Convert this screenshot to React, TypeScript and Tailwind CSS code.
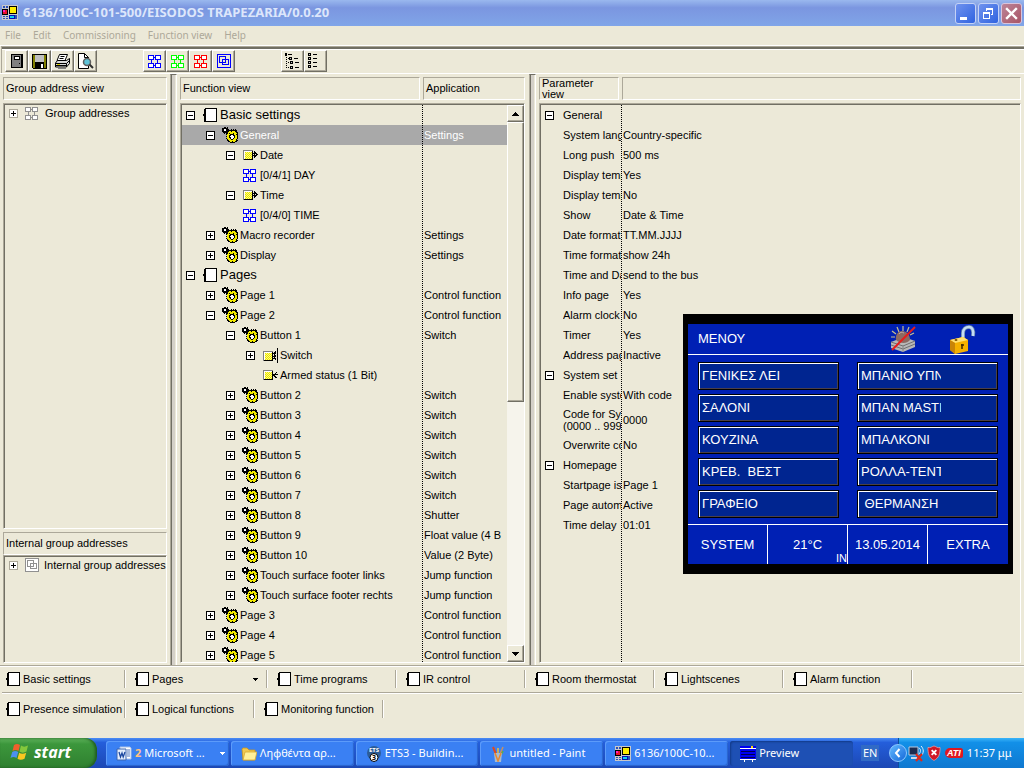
import React from 'react';
import clsx from 'clsx';

const SANS = "font-['Liberation_Sans',sans-serif]";
const UI = "font-['Noto_Sans',sans-serif]";

interface PixelIconProps {
  rows: string[];
  colors: Record<string, string>;
  className?: string;
}

// Draws a small bitmap, one character per pixel
const PixelIcon: React.FC<PixelIconProps> = ({ rows, colors, className }) => (
  <svg
    width={rows[0].length}
    height={rows.length}
    viewBox={`0 0 ${rows[0].length} ${rows.length}`}
    shapeRendering="crispEdges"
    className={clsx('shrink-0', className)}
    aria-hidden="true"
  >
    {rows.flatMap((row, y) =>
      row.split('').map((c, x) =>
        colors[c] ? <rect key={`${x}-${y}`} x={x} y={y} width="1" height="1" fill={colors[c]} /> : null
      )
    )}
  </svg>
);

const GEARS = [
  '..KK.K..........',
  'KKKKKK..........',
  'KKWWKKK..K.K.K..',
  'KKWWKKKKKKKKKKK.',
  'KKKKKKKYYKYYYKK.',
  '.KKKKKYYYYYYYYKK',
  '..K.KKYKYYYKYYYK',
  '....KYYYKKKKYYKK',
  '.....YYKKWWKKYYK',
  '....KYYKWWWWKYYK',
  '.....YYKKWWWKYYK',
  '....KYYYKWWKYYYK',
  '.....KYYYKKYYYK.',
  '.....KKYYYYYYYKK',
  '......KKYYKYYKK.',
  '........KKKKK...',
];

const NET = [
  'BBBBBB.BBBBBB',
  'BWWWWB.BWWWWB',
  'BWWWWBBBWWWWB',
  'BWWWWB.BWWWWB',
  'BBBBBB.BBBBBB',
  '...B.....B...',
  '...B.....B...',
  '...B.....B...',
  'BBBBBB.BBBBBB',
  'BWWWWB.BWWWWB',
  'BWWWWBBBWWWWB',
  'BWWWWB.BWWWWB',
  'BBBBBB.BBBBBB',
];

const OBJ_OUT = [
  'GGGGGGGGGG......',
  'GWWWWWWWWK.K....',
  'GWYVYVYVYK.KK...',
  'GWVYVYVYVKKKKK..',
  'GWYVYVYVYK.K.KK.',
  'GWVYVYVYVKKKKK..',
  'GWYVYVYVYK.KK...',
  'GWVYVYVYVK.K....',
  'GWYVYVYVYK......',
  'GKKKKKKKKK......',
];

const OBJ_IN = [
  'GGGGGGGGGG......',
  'GWWWWWWWWK......',
  'GWYVYVYVYK...K..',
  'GWVYVYVYVK..K...',
  'GWYVYVYVYKKKKKK.',
  'GWVYVYVYVKKK....',
  'GWYVYVYVYK.KK...',
  'GWVYVYVYVK..KK..',
  'GWYVYVYVYK......',
  'GKKKKKKKKK......',
];

const OBJ_BOTH = [
  '..............K.',
  '..............K.',
  '..............K.',
  'GGGGGGGGGG..K.K.',
  'GWWWWWWWWK.KK.K.',
  'GWYVYVYVYKKKK.K.',
  'GWVYVYVYVK.K..K.',
  'GWYVYVYVYK.KK.K.',
  'GWVYVYVYVKKKK.K.',
  'GWYVYVYVYK.K..K.',
  'GWVYVYVYVKKKK.K.',
  'GWYVYVYVYK..K.K.',
  'GKKKKKKKKK....K.',
  '..............K.',
  '..............K.',
];

const BOOK = [
  '..KKKKKKKKKKKK',
  '.KKWWWWWWWWWWK',
  '.KKWWWWWWWWWWK',
  '.KKWWWWWWWWWWK',
  '.KKWWWWWWWWWWK',
  '.KKWWWWWWWWWWK',
  'KKKWWWWWWWWWWK',
  'KKKWWWWWWWWWWK',
  '.KKWWWWWWWWWWK',
  '.KKWWWWWWWWWWK',
  '.KKWWWWWWWWWWK',
  '.KKWWWWWWWWWWK',
  '.KKWWWWWWWWWWK',
  '.KKKKKKKKKKKKK',
];

const INK = { K: '#000', W: '#fff', Y: '#e8e000', G: '#808080', V: '#ffff80' };

const Gears = () => <PixelIcon rows={GEARS} colors={{ K: '#000', W: '#fff', Y: '#f2ea00' }} />;
const Book = () => <PixelIcon rows={BOOK} colors={INK} />;
const Net: React.FC<{ color: string }> = ({ color }) => (
  <PixelIcon rows={NET} colors={{ B: color, W: '#fff' }} />
);

const InternalNet: React.FC<{ color: string; fill: string }> = ({ color, fill }) => (
  <svg width="14" height="14" viewBox="0 0 14 14" shapeRendering="crispEdges" className="shrink-0" aria-hidden="true">
    <rect x="0.5" y="0.5" width="13" height="13" fill={fill} stroke={color} />
    <path d="M2.5 2.5h6v6h-6zM5.5 5.5h6v5h-6z" fill="none" stroke={color} />
  </svg>
);

const AppIcon: React.FC<{ className?: string }> = ({ className }) => (
  <svg width="16" height="16" viewBox="0 0 16 16" shapeRendering="crispEdges" className={clsx('shrink-0', className)} aria-hidden="true">
    <path d="M0 0h16v15H0z" fill="#c8c8c8" />
    <path d="M1 1h5v2H1zM1 11h5v3H1zM13 10h2v4h-2z" fill="#2a4fb8" />
    <path d="M3 0h1v3H3zM3 11h1v3H3zM0 12h6v1H0z" fill="#c8c8c8" />
    <path d="M0 4h6v6H0z" fill="#000" />
    <path d="M1 5h4v4H1z" fill="#e8102c" />
    <path d="M1 5h2v2H1z" fill="#ff20c0" />
    <path d="M7 1h8v8H7z" fill="#000" />
    <path d="M8 2h6v6H8z" fill="#ffee00" />
    <path d="M7 10h6v4H7z" fill="#0010b0" />
    <path d="M8 11h4v2H8z" fill="#10d0f0" />
  </svg>
);

const Expander: React.FC<{ open?: boolean; label: string; faded?: boolean }> = ({ open, label, faded }) => (
  <button
    type="button"
    aria-label={label}
    aria-expanded={!!open}
    className={clsx('block size-[9px] shrink-0 border bg-white', faded ? 'border-[#aca899]' : 'border-black')}
  >
    <svg width="7" height="7" viewBox="0 0 7 7" shapeRendering="crispEdges" className="block" aria-hidden="true">
      <path d="M1 3h5v1H1z" />
      {!open && <path d="M3 1h1v5H3z" />}
    </svg>
  </button>
);

type IconKind = 'book' | 'gears' | 'out' | 'in' | 'both' | 'net';

interface TreeRow {
  level: number;
  icon: IconKind;
  label: string;
  state?: 'open' | 'closed';
  app?: string;
}

const treeRows: TreeRow[] = [
  { level: 0, icon: 'book', label: 'Basic settings', state: 'open' },
  { level: 1, icon: 'gears', label: 'General', state: 'open', app: 'Settings' },
  { level: 2, icon: 'out', label: 'Date', state: 'open' },
  { level: 2, icon: 'net', label: '[0/4/1] DAY' },
  { level: 2, icon: 'out', label: 'Time', state: 'open' },
  { level: 2, icon: 'net', label: '[0/4/0] TIME' },
  { level: 1, icon: 'gears', label: 'Macro recorder', state: 'closed', app: 'Settings' },
  { level: 1, icon: 'gears', label: 'Display', state: 'closed', app: 'Settings' },
  { level: 0, icon: 'book', label: 'Pages', state: 'open' },
  { level: 1, icon: 'gears', label: 'Page 1', state: 'closed', app: 'Control function' },
  { level: 1, icon: 'gears', label: 'Page 2', state: 'open', app: 'Control function' },
  { level: 2, icon: 'gears', label: 'Button 1', state: 'open', app: 'Switch' },
  { level: 3, icon: 'both', label: 'Switch', state: 'closed' },
  { level: 3, icon: 'in', label: 'Armed status (1 Bit)' },
  { level: 2, icon: 'gears', label: 'Button 2', state: 'closed', app: 'Switch' },
  { level: 2, icon: 'gears', label: 'Button 3', state: 'closed', app: 'Switch' },
  { level: 2, icon: 'gears', label: 'Button 4', state: 'closed', app: 'Switch' },
  { level: 2, icon: 'gears', label: 'Button 5', state: 'closed', app: 'Switch' },
  { level: 2, icon: 'gears', label: 'Button 6', state: 'closed', app: 'Switch' },
  { level: 2, icon: 'gears', label: 'Button 7', state: 'closed', app: 'Switch' },
  { level: 2, icon: 'gears', label: 'Button 8', state: 'closed', app: 'Shutter' },
  { level: 2, icon: 'gears', label: 'Button 9', state: 'closed', app: 'Float value (4 B' },
  { level: 2, icon: 'gears', label: 'Button 10', state: 'closed', app: 'Value (2 Byte)' },
  { level: 2, icon: 'gears', label: 'Touch surface footer links', state: 'closed', app: 'Jump function' },
  { level: 2, icon: 'gears', label: 'Touch surface footer rechts', state: 'closed', app: 'Jump function' },
  { level: 1, icon: 'gears', label: 'Page 3', state: 'closed', app: 'Control function' },
  { level: 1, icon: 'gears', label: 'Page 4', state: 'closed', app: 'Control function' },
  { level: 1, icon: 'gears', label: 'Page 5', state: 'closed', app: 'Control function' },
];

const indents = ['pl-1', 'pl-6', 'pl-11', 'pl-16'];

const params: { label: string; value?: string }[] = [
  { label: 'General' },
  { label: 'System lang', value: 'Country-specific' },
  { label: 'Long push', value: '500 ms' },
  { label: 'Display temp', value: 'Yes' },
  { label: 'Display temp', value: 'No' },
  { label: 'Show', value: 'Date & Time' },
  { label: 'Date format', value: 'TT.MM.JJJJ' },
  { label: 'Time format', value: 'show 24h' },
  { label: 'Time and Da', value: 'send to the bus' },
  { label: 'Info page', value: 'Yes' },
  { label: 'Alarm clock', value: 'No' },
  { label: 'Timer', value: 'Yes' },
  { label: 'Address pag', value: 'Inactive' },
  { label: 'System set' },
  { label: 'Enable syste', value: 'With code' },
  { label: 'Code for Sys\n(0000 .. 999', value: '0000' },
  { label: 'Overwrite co', value: 'No' },
  { label: 'Homepage' },
  { label: 'Startpage is', value: 'Page 1' },
  { label: 'Page autom', value: 'Active' },
  { label: 'Time delay', value: '01:01' },
];

const TreeIcon: React.FC<{ kind: IconKind }> = ({ kind }) => {
  switch (kind) {
    case 'book':
      return <Book />;
    case 'gears':
      return <Gears />;
    case 'out':
      return <PixelIcon rows={OBJ_OUT} colors={INK} />;
    case 'in':
      return <PixelIcon rows={OBJ_IN} colors={INK} />;
    case 'both':
      return <PixelIcon rows={OBJ_BOTH} colors={INK} />;
    default:
      return <Net color="#0000ff" />;
  }
};

const HeaderCell: React.FC<{ className?: string; children?: React.ReactNode }> = ({ className, children }) => (
  <div
    className={clsx(
      'flex h-[23px] items-center border border-t-[#aca899] border-r-white border-b-white border-l-[#aca899] pl-0.5',
      className
    )}
  >
    {children}
  </div>
);

const Sunken: React.FC<{ className?: string; children?: React.ReactNode }> = ({ className, children }) => (
  <div className={clsx('border border-t-[#aca899] border-r-white border-b-white border-l-[#aca899]', className)}>
    <div className="relative flex h-full overflow-hidden border-t border-l border-[#716f64]">{children}</div>
  </div>
);

const Splitter = () => (
  <div className="w-[7px] shrink-0 border-t border-r border-l border-t-[#716f64] border-r-white border-l-[#aca899]">
    <div className="h-full border-r border-l border-r-[#ece9d8] border-l-[#716f64] bg-[#d4d0c8]" />
  </div>
);

const RAISED = 'border border-t-white border-r-[#716f64] border-b-[#716f64] border-l-white bg-[#ece9d8] shadow-[inset_-1px_-1px_0_#aca899]';

const TitleBar = () => (
  <header className="flex h-[26px] shrink-0 items-center bg-linear-to-b from-[#9ab8ee] via-[#7b96e0] via-30% to-[#80a5e8] pr-0.5 pl-0.5">
    <AppIcon />
    <h1 className="ml-[5px] flex-1 text-[13px] font-bold whitespace-nowrap text-[#dce6fb] font-['Noto_Sans',sans-serif]">
      6136/100C-101-500/EISODOS TRAPEZARIA/0.0.20
    </h1>
    <div className="flex gap-[2px]">
      <button type="button" aria-label="Minimize" className="size-[21px] rounded-[3px] border border-[#c4d2f6] bg-linear-to-br from-[#6f92ee] to-[#2f62e0]">
        <svg width="19" height="19" viewBox="0 0 19 19" className="block"><path d="M4 13h7v3H4z" fill="#fff" /></svg>
      </button>
      <button type="button" aria-label="Restore" className="size-[21px] rounded-[3px] border border-[#c4d2f6] bg-linear-to-br from-[#6f92ee] to-[#2f62e0]">
        <svg width="19" height="19" viewBox="0 0 19 19" className="block" fill="#fff" shapeRendering="crispEdges">
          <path d="M7 4h7v7h-2v-1h1V6H8v1H7z" />
          <path fillRule="evenodd" d="M4 8h7v7H4zM5 10v4h5v-4z" />
        </svg>
      </button>
      <button type="button" aria-label="Close" className="size-[21px] rounded-[3px] border border-[#d8c4dc] bg-linear-to-br from-[#bb8499] to-[#a85566]">
        <svg width="19" height="19" viewBox="0 0 19 19" className="block"><path d="M5 5l9 9M14 5l-9 9" stroke="#fff" strokeWidth="2.400" strokeLinecap="square" /></svg>
      </button>
    </div>
  </header>
);

const ToolButton: React.FC<{ label: string; children: React.ReactNode }> = ({ label, children }) => (
  <button type="button" aria-label={label} className={clsx('flex h-[22px] w-[23px] items-center justify-center', RAISED)}>
    {children}
  </button>
);

const ListGlyph: React.FC<{ tree?: boolean }> = ({ tree }) => (
  <svg width="17" height="16" viewBox="0 0 17 16" shapeRendering="crispEdges" aria-hidden="true">
    {tree ? (
      <>
        <path d="M1 0h2v3H1zM4 1h4v1H4zM2 4h1v1H2zM2 6h1v1H2zM2 8h1v1H2zM2 10h1v1H2zM2 12h1v1H2zM2 14h1v1H2zM4 5h1v1H4zM4 9h1v1H4zM4 14h1v1H4z" />
        <path d="M5 4h3v3H5zM10 5h4v1h-4zM6 8h3v3H6zM11 9h4v1h-4zM6 13h3v3H6zM11 14h4v1h-4z" />
        <path d="M6 5h1v1H6zM7 9h1v1H7zM7 14h1v1H7z" fill="#c8c8c8" />
      </>
    ) : (
      <>
        <path d="M1 0h3v3H1zM1 4h3v3H1zM1 8h3v3H1zM1 12h3v3H1zM6 1h4v1H6zM6 5h4v1H6zM6 9h4v1H6zM6 13h4v1H6z" />
        <path d="M2 1h1v1H2zM2 5h1v1H2zM2 9h1v1H2zM2 13h1v1H2z" fill="#ccc" />
      </>
    )}
  </svg>
);

const Toolbar = () => (
  <div className="border-t border-b border-white">
    <div className="ml-px flex gap-[46px] border-t border-l border-[#aca899] pb-px pl-[3px] shadow-[inset_0_2px_0_#716f64,inset_0_3px_0_white]">
      <div className="flex pt-[3px]">
        <ToolButton label="Catalogue">
          <svg width="12" height="16" viewBox="0 0 12 16" shapeRendering="crispEdges" aria-hidden="true">
            <path d="M0 1h12v14H0z" />
            <path d="M1 2h9v12H1z" fill="#808080" />
            <path d="M3 3h6v4H3z" />
            <path d="M4 4h4v2H4z" fill="#fff" />
            <path d="M8 10h1v1H8z" />
          </svg>
        </ToolButton>
        <ToolButton label="Save">
          <svg width="15" height="15" viewBox="0 0 15 15" shapeRendering="crispEdges" aria-hidden="true">
            <path d="M0 0h15v15H1l-1-1z" />
            <path d="M1 1h2v8h9V1h2v13H1z" fill="#808000" />
            <path d="M3 1h9v7H3z" fill="#c0c0c0" />
            <path d="M3 9h9v6H3z" />
            <path d="M9 10h2v4H9z" fill="#fff" />
          </svg>
        </ToolButton>
        <ToolButton label="Print">
          <svg width="17" height="16" viewBox="0 0 17 16" aria-hidden="true">
            <path d="M5.500 1.500h8l-2.500 6H3z" fill="#fff" stroke="#000" />
            <path d="M6.500 3.500h4M5.500 5.500h4" stroke="#000" />
            <path d="M3.500 7.500h9l3-2v5l-3 3.500h-11v-4z" fill="#d8d8d8" stroke="#000" />
            <path d="M1.500 10.500h11l3-3M1.500 12.500h11M12.500 10.500v3.500" stroke="#000" fill="none" />
            <path d="M3 11.500h3" stroke="#d8d000" />
            <path d="M4 15.500h8" stroke="#808080" />
          </svg>
        </ToolButton>
        <ToolButton label="Print preview">
          <svg width="17" height="16" viewBox="0 0 17 16" aria-hidden="true">
            <path d="M1.500 0.500h6l4 4v11h-10z" fill="#fff" stroke="#000" />
            <path d="M7.500 0.500v4h4" fill="none" stroke="#000" />
            <circle cx="10" cy="9" r="3.500" fill="#5fc4d8" stroke="#606060" strokeWidth="1.500" />
            <path d="M12.500 11.500l3.500 3.500" stroke="#303030" strokeWidth="2" />
          </svg>
        </ToolButton>
      </div>
      <div className="flex pt-[3px]">
        <ToolButton label="Group addresses"><Net color="#0000ff" /></ToolButton>
        <ToolButton label="Green addresses"><Net color="#00ff00" /></ToolButton>
        <ToolButton label="Red addresses"><Net color="#ff0000" /></ToolButton>
        <ToolButton label="Internal addresses"><InternalNet color="#0000ff" fill="#ece9d8" /></ToolButton>
      </div>
      <div className="flex pt-[3px]">
        <ToolButton label="Expand tree"><ListGlyph tree /></ToolButton>
        <ToolButton label="Collapse tree"><ListGlyph /></ToolButton>
      </div>
    </div>
  </div>
);

const AddressPanel = () => (
  <div className="flex w-[164px] shrink-0 flex-col pt-[3px] pb-0.5">
    <HeaderCell>Group address view</HeaderCell>
    <Sunken className="mt-[3px] flex-1">
      <div className="flex h-4 items-center pl-1">
        <Expander label="Group addresses" faded />
        <span className="ml-[7px] flex w-5"><Net color="#909090" /></span>
        <span className="whitespace-nowrap">Group addresses</span>
      </div>
    </Sunken>
    <HeaderCell className="mt-[3px]">Internal group addresses</HeaderCell>
    <Sunken className="h-[108px]">
      <div className="flex h-4 items-center pl-1">
        <Expander label="Internal group addresses" faded />
        <span className="ml-[7px] flex w-[19px]"><InternalNet color="#909090" fill="#fff" /></span>
        <span className="whitespace-nowrap">Internal group addresses</span>
      </div>
    </Sunken>
  </div>
);

const ScrollBar = () => (
  <div className="flex w-[17px] shrink-0 flex-col bg-[#f6f4ec]">
    <button type="button" aria-label="Scroll up" className={clsx('flex h-[17px] items-center justify-center', RAISED)}>
      <svg width="7" height="4" viewBox="0 0 7 4" shapeRendering="crispEdges"><path d="M3 0h1v1h1v1h1v1h1v1H0V3h1V2h1V1h1z" /></svg>
    </button>
    <div className={clsx('h-[280px]', RAISED)} />
    <div className="flex-1" />
    <button type="button" aria-label="Scroll down" className={clsx('flex h-[17px] items-center justify-center', RAISED)}>
      <svg width="7" height="4" viewBox="0 0 7 4" shapeRendering="crispEdges"><path d="M0 0h7v1H6v1H5v1H4v1H3V3H2V2H1V1H0z" /></svg>
    </button>
  </div>
);

const FunctionPanel = () => (
  <div className="flex w-[345px] shrink-0 flex-col pt-[3px] pb-0.5">
    <div className="flex gap-[3px]">
      <HeaderCell className="w-[240px]">Function view</HeaderCell>
      <HeaderCell className="flex-1">Application</HeaderCell>
    </div>
    <Sunken className="mt-[3px] min-h-0 flex-1">
      <div className="relative h-full flex-1 overflow-hidden">
        <table className="w-full table-fixed border-collapse">
          <colgroup>
            <col className="w-[240px]" />
            <col />
          </colgroup>
          <tbody>
            {treeRows.map((row, i) => (
              <tr key={i} className={clsx('h-5', row.label === 'General' && 'bg-[#a9a9a9] text-white')}>
                <td className="p-0">
                  <div className={clsx('flex items-center whitespace-nowrap', indents[row.level])}>
                    <span className="w-4 shrink-0">
                      {row.state && <Expander open={row.state === 'open'} label={row.label} />}
                    </span>
                    <span className={clsx('flex w-[18px] shrink-0 items-center', row.icon !== 'gears' && 'pl-px')}>
                      <TreeIcon kind={row.icon} />
                    </span>
                    <span className={row.level === 0 ? 'text-[13px] leading-5' : 'leading-5'}>{row.label}</span>
                  </div>
                </td>
                <td className="overflow-hidden p-0 pl-0.5 whitespace-nowrap">{row.app}</td>
              </tr>
            ))}
          </tbody>
        </table>
        <div className="absolute inset-y-0 left-[240px] border-l border-dotted border-black" />
      </div>
      <ScrollBar />
    </Sunken>
  </div>
);

const ParameterPanel = () => (
  <div className="flex min-w-0 flex-1 flex-col pt-[3px] pr-[3px] pb-0.5">
    <div className="flex gap-[3px]">
      <HeaderCell className="w-20 shrink-0 leading-[11px]">
        <span className="w-[60px]">Parameter view</span>
      </HeaderCell>
      <HeaderCell className="flex-1" />
    </div>
    <Sunken className="mt-[3px] min-h-0 flex-1">
      <table className="h-fit w-full table-fixed border-collapse">
        <colgroup>
          <col className="w-[22px]" />
          <col className="w-[58px]" />
          <col />
        </colgroup>
        <tbody>
          {params.map((p, i) => (
            <tr key={i} className={p.label.includes('\n') ? 'h-[30px]' : 'h-5'}>
              <td className="p-0 pl-1">{p.value === undefined && <Expander open label={p.label} />}</td>
              <td className="overflow-hidden p-0 leading-3 whitespace-pre">{p.label}</td>
              <td className="p-0 pl-0.5">{p.value}</td>
            </tr>
          ))}
        </tbody>
      </table>
      <div className="absolute inset-y-0 left-20 border-l border-dotted border-black" />
    </Sunken>
  </div>
);

const shortcuts = [
  ['Basic settings', 'Pages', 'Time programs', 'IR control', 'Room thermostat', 'Lightscenes', 'Alarm function'],
  ['Presence simulation', 'Logical functions', 'Monitoring function'],
];

const ShortcutRow: React.FC<{ items: string[] }> = ({ items }) => (
  <div className="flex items-center gap-[9px] pl-1.5">
    {items.map((item) => (
      <div key={item} className="flex">
        <button
          type="button"
          className={clsx('flex items-center gap-[3px] whitespace-nowrap', item === 'Pages' ? 'w-[131px]' : 'w-[118px]')}
        >
          <Book />
          {item}
          {item === 'Pages' && (
            <svg width="5" height="3" viewBox="0 0 5 3" shapeRendering="crispEdges" className="mr-2 ml-auto">
              <path d="M0 0h5v1H4v1H3v1H2V2H1V1H0z" />
            </svg>
          )}
        </button>
        <span className="h-[18px] w-0.5 border-r border-l border-r-white border-l-[#aca899]" />
      </div>
    ))}
  </div>
);

const Shortcuts = () => (
  <nav className="h-[73px] shrink-0 border-t border-[#aca899] shadow-[inset_0_1px_0_white]">
    <div className="flex h-[26px] items-center"><ShortcutRow items={shortcuts[0]} /></div>
    <div className="mr-0.5 ml-0.5 border-t border-b border-t-[#aca899] border-b-white" />
    <div className="flex h-[30px] items-center"><ShortcutRow items={shortcuts[1]} /></div>
  </nav>
);

const pageButtons = [
  'ΓΕΝΙΚΕΣ ΛΕΙ', 'ΜΠΑΝΙΟ ΥΠΝ',
  'ΣΑΛΟΝΙ', 'ΜΠΑΝ MASTI',
  'ΚΟΥΖΙΝΑ', 'ΜΠΑΛΚΟΝΙ',
  'ΚΡΕΒ.  ΒΕΣΤ', 'ΡΟΛΛΑ-ΤΕΝΤ',
  'ΓΡΑΦΕΙΟ', ' ΘΕΡΜΑΝΣΗ',
];

const AlarmOff = () => (
  <svg width="26" height="28" viewBox="0 0 26 28" aria-hidden="true">
    <path d="M13 1v5M7 2l2 5M2 6l4 3M1 12h4M19 2l-2 5M24 8l-4 2" stroke="#c8c090" strokeWidth="1.200" />
    <path d="M1 17l13-5 11 4v6l-12 5-12-4z" fill="#b8b8b8" />
    <path d="M1 17l12 4 12-5M1 20l12 4 12-5" fill="none" stroke="#707070" />
    <path d="M13 21v6" stroke="#888" />
    <path d="M6 15c-1-5 2-9 6-9s8 3 8 9c-3 4-10 4-14 0z" fill="#8c6a62" />
    <path d="M9 9c1-2 3-2 5-1" stroke="#c0a8a0" fill="none" />
    <path d="M2 25L25 2" stroke="#e81c1c" strokeWidth="2" />
  </svg>
);

const OpenLock = () => (
  <svg width="27" height="29" viewBox="0 0 27 29" aria-hidden="true">
    <path d="M14 13V8c0-4 3-6 6-6s5 3 4 9" fill="none" stroke="#5f7faa" strokeWidth="4" />
    <path d="M14 13V8c0-4 3-6 6-6s5 3 4 9" fill="none" stroke="#c4dcf4" strokeWidth="2.500" />
    <path d="M1 15l13-3 5 3v11L6 29l-5-4z" fill="#f5b000" />
    <path d="M1 15l13-3 5 3-13 3z" fill="#ffe070" />
    <path d="M1 15l5 3v11l-5-4z" fill="#c88408" />
    <path d="M13 19v5M12 20h3" stroke="#402800" strokeWidth="1.500" />
    <ellipse cx="7" cy="15" rx="1.500" ry="1" fill="#805000" />
  </svg>
);

// Touch panel preview floating above the main window
const PreviewWindow = () => (
  <section
    aria-label="Preview"
    className="absolute top-[314px] left-[683px] w-[330px] border-x-[5px] border-y-[10px] border-black bg-[#0020b4] text-[13px] leading-4 text-white"
  >
    <div className="flex h-[31px] items-center border-b border-white pr-8 pl-2.5">
      <span className="flex-1">ΜΕΝΟΥ</span>
      <AlarmOff />
      <span className="w-[33px]" />
      <OpenLock />
    </div>
    <div className="grid grid-cols-2 gap-x-[18px] gap-y-1 px-2.5 pt-[7px] pb-1.5">
      {pageButtons.map((text) => (
        <button
          key={text}
          type="button"
          className="flex h-7 items-center border border-black bg-[#002590] text-left shadow-[inset_1px_1px_0_white,inset_-1px_-1px_0_#4a4048]"
        >
          <span className="w-[83px] overflow-hidden pl-[3px] whitespace-pre">{text}</span>
        </button>
      ))}
    </div>
    <div className="grid h-10 grid-cols-4 divide-x divide-white border-t border-white">
      <button type="button">SYSTEM</button>
      <div className="relative flex items-center justify-center">
        21°C
        <span className="absolute right-0 bottom-0 text-[11px] leading-3">IN</span>
      </div>
      <div className="flex items-center justify-center">13.05.2014</div>
      <button type="button">EXTRA</button>
    </div>
  </section>
);

const XpFlag = () => (
  <svg width="20" height="18" viewBox="0 0 20 18" aria-hidden="true">
    <path d="M4 2c2-1.500 4-1.500 6 0L8.500 8c-2-1.500-4-1.500-6 0z" fill="#f0602c" />
    <path d="M11 2.500c2 1.500 4 1.500 7 0L16.500 8.500c-2.500 1.500-5 1.500-7 0z" fill="#84c83c" />
    <path d="M2.200 9c2-1.500 4-1.500 6 0l-1.700 6c-2-1.500-4-1.500-6 0z" fill="#4c90f0" />
    <path d="M9.200 9.700c2 1.500 4.500 1.500 7 0l-1.700 6c-2.500 1.500-5 1.500-7 0z" fill="#fbc820" />
  </svg>
);

const WordIcon = () => (
  <svg width="16" height="16" viewBox="0 0 16 16" aria-hidden="true">
    <path d="M4 1h10l1 1v11H4z" fill="#fff" stroke="#a8c0e8" />
    <path d="M11 4h3M11 6h3M11 8h3M11 10h3" stroke="#5078c0" />
    <path d="M1 3h9v11H1z" fill="#e4eefc" stroke="#3a64b0" />
    <path d="M3 6l1.500 5L6 7l1.200 4L9 6" fill="none" stroke="#1c48a0" strokeWidth="1.300" />
  </svg>
);

const FolderIcon = () => (
  <svg width="16" height="16" viewBox="0 0 16 16" aria-hidden="true">
    <path d="M1 3l1-1h4l2 2h6v10H2z" fill="#f0c850" stroke="#c89420" strokeWidth="0.800" />
    <path d="M2 14l2-8h12l-2 8z" fill="#fff09a" stroke="#d8a830" strokeWidth="0.800" />
  </svg>
);

const EtsIcon = () => (
  <svg width="16" height="16" viewBox="0 0 16 16" aria-hidden="true">
    <circle cx="8" cy="7" r="7" fill="#2c5c98" />
    <text x="8" y="6" fontSize="6" fontWeight="bold" textAnchor="middle" fill="#fff">ETS</text>
    <circle cx="8" cy="11.500" r="4" fill="#fff" stroke="#000" />
    <text x="8" y="14" fontSize="7" fontWeight="bold" textAnchor="middle">3</text>
  </svg>
);

const PaintIcon = () => (
  <svg width="16" height="16" viewBox="0 0 16 16" aria-hidden="true">
    <path d="M6 8L3 1" stroke="#e04820" strokeWidth="2" />
    <path d="M8 8V2" stroke="#f0c030" strokeWidth="1.500" />
    <path d="M10 8l3-7" stroke="#c89060" strokeWidth="1.500" />
    <path d="M11 9l2-4" stroke="#60b040" strokeWidth="1.500" />
    <path d="M4 7h8l-1 9H5z" fill="#a8bcd0" />
    <path d="M5 7l3 8 3-8" fill="none" stroke="#e88830" strokeWidth="1.500" />
  </svg>
);

const PreviewIcon = () => (
  <svg width="16" height="16" viewBox="0 0 16 16" shapeRendering="crispEdges" aria-hidden="true">
    <path d="M0 0h16v16H0z" fill="#0000f0" />
    <path d="M0 13h16v3H0z" fill="#1e50b4" />
    <path d="M0 2h16v1H0zM0 13h16v1H0zM4 14h1v2H4zM12 14h1v2h-1z" fill="#fff" />
    <path d="M1 5h14v1H1zM1 8h14v1H1zM1 11h14v1H1z" fill="#000050" />
    <path d="M11 0h2v2h-2z" fill="#ffe000" />
  </svg>
);

const tasks = [
  { label: 'Microsoft ...', icon: <WordIcon />, count: 2 },
  { label: 'Ληφθέντα αρ...', icon: <FolderIcon /> },
  { label: 'ETS3 - Buildin...', icon: <EtsIcon /> },
  { label: 'untitled - Paint', icon: <PaintIcon /> },
  { label: '6136/100C-10...', icon: <AppIcon /> },
  { label: 'Preview', icon: <PreviewIcon />, active: true },
];

const TaskBar = () => (
  <footer className={clsx('flex h-[30px] shrink-0 bg-linear-to-b from-[#4a8cf5] via-[#245edb] via-15% to-[#1c48b4] text-[11px] text-white', UI)}>
    <button
      type="button"
      className="flex w-[97px] items-center gap-1 rounded-r-xl bg-linear-to-b from-[#5fb35c] via-[#3c973c] via-20% to-[#2f8030] pb-0.5 pl-2.5 font-['Open_Sans',sans-serif] text-[16px] font-bold italic shadow-[inset_-2px_0_3px_#1f5a20]"
    >
      <XpFlag />
      start
    </button>
    <div className="flex min-w-0 flex-1 gap-0.5 pt-[3px] pb-0.5 pl-[9px]">
      {tasks.map((t) => (
        <button
          key={t.label}
          type="button"
          className={clsx(
            'flex min-w-0 flex-1 items-center gap-[3px] rounded-[3px] pr-1 pl-2.5 whitespace-nowrap',
            t.active
              ? 'bg-[#1e50b4] shadow-[inset_1px_1px_2px_#123a88]'
              : 'bg-[#3a80f3] shadow-[inset_1px_1px_0_#5c9bfa,inset_-1px_-1px_1px_#2a63cc]'
          )}
        >
          <span className="shrink-0">{t.icon}</span>
          {t.count && <span className="font-bold text-[#ffc080]">{t.count}</span>}
          <span>{t.label}</span>
          {t.count && (
            <svg width="5" height="3" viewBox="0 0 5 3" shapeRendering="crispEdges" className="ml-auto">
              <path d="M0 0h5v1H4v1H3v1H2V2H1V1H0z" fill="#fff" />
            </svg>
          )}
        </button>
      ))}
    </div>
    <div className="flex w-[45px] items-center pl-2">
      <button type="button" className="bg-[#316ac5] px-0.5 leading-4">EN</button>
    </div>
    <div className="relative flex w-[126px] items-center bg-linear-to-b from-[#38b4f8] via-[#1290e8] via-15% to-[#0f78d0] pl-2.5 shadow-[inset_1px_0_0_#0c4f9c]">
      <button type="button" aria-label="Show hidden icons" className="absolute top-[6px] -left-[9px] size-[18px] rounded-full border border-[#8cc8ff] bg-linear-to-br from-[#60b8ff] to-[#1468d8]">
        <svg width="16" height="16" viewBox="0 0 16 16" className="block"><path d="M9.500 4L6 8l3.500 4" fill="none" stroke="#fff" strokeWidth="2" /></svg>
      </button>
      <svg width="17" height="17" viewBox="0 0 17 17" aria-hidden="true">
        <path d="M1 2h9v8H1z" fill="#1c2c50" stroke="#b8c8e0" />
        <path d="M3 12h6v2H3z" fill="#d0d8e8" />
        <path d="M11 3c2 1 2 4 0 6M13 1c3 3 3 7 0 10" fill="none" stroke="#e0f0ff" />
        <path d="M8 9l6 7M14 9l-6 7" stroke="#e02818" strokeWidth="2" />
      </svg>
      <svg width="14" height="16" viewBox="0 0 15 16" className="ml-0.5" aria-hidden="true">
        <path d="M1 2c3 1 4-1 6.500-1.500C10 1 11 3 14 2c0 7-1 11-6.500 14C2 13 1 9 1 2z" fill="#d01828" stroke="#f0a0a0" strokeWidth="0.800" />
        <path d="M5 5l5 5M10 5l-5 5" stroke="#fff" strokeWidth="2" />
      </svg>
      <span className="ml-1 rounded-l-lg rounded-r-sm bg-[#e01820] px-0.5 font-['Liberation_Sans',sans-serif] text-[9px] leading-[10px] font-bold italic">ATI</span>
      <span className="ml-1 whitespace-nowrap">11:37 μμ</span>
    </div>
  </footer>
);

const menus = ['File', 'Edit', 'Commissioning', 'Function view', 'Help'];

const App: React.FC = () => (
  <div className={clsx('relative flex h-screen flex-col overflow-hidden bg-[#ece9d8] text-[11px] text-black', SANS)}>
    <TitleBar />
    <nav className={clsx('flex h-[19px] shrink-0 items-center gap-3 pl-[5px] text-[10px] text-[#aca899]', UI)}>
      {menus.map((m) => (
        <button key={m} type="button">{m}</button>
      ))}
    </nav>
    <Toolbar />
    <main className="flex min-h-0 flex-1 pl-[3px]">
      <AddressPanel />
      <div className="ml-[3px] flex"><Splitter /></div>
      <div className="ml-[3px] flex"><FunctionPanel /></div>
      <div className="ml-[4px] flex"><Splitter /></div>
      <div className="ml-[3px] flex min-w-0 flex-1"><ParameterPanel /></div>
    </main>
    <Shortcuts />
    <TaskBar />
    <PreviewWindow />
  </div>
);

export default App;
